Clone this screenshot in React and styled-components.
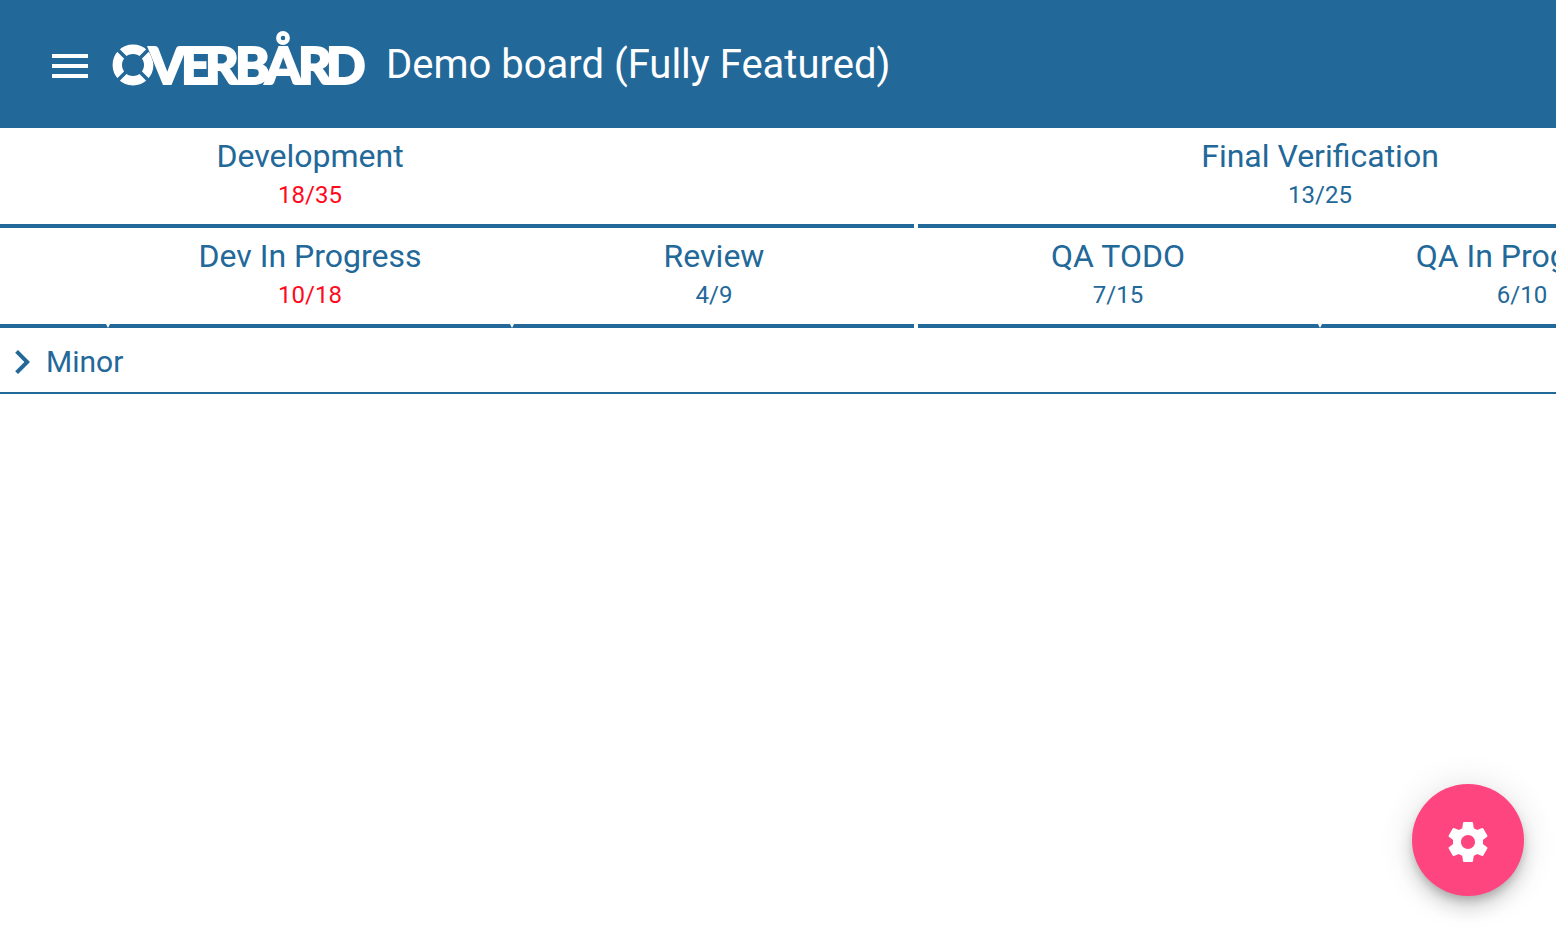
import React, { useLayoutEffect, useRef } from "react";
import styled, { createGlobalStyle, css } from "styled-components";
import { MdMenu, MdChevronRight } from "react-icons/md";

const blue = "#226899";
const red = "#ff0a1c";
const pink = "#ff4580";

const GlobalStyle = createGlobalStyle`
  *, *::before, *::after { box-sizing: border-box; }
  body {
    margin: 0;
    background: #ffffff;
    color: ${blue};
    font-family: Roboto, "Liberation Sans", sans-serif;
  }
`;

const Page = styled.div`
  min-height: 100vh;
  overflow: hidden;
`;

const Toolbar = styled.header`
  display: flex;
  align-items: center;
  height: 128px;
  padding: 4px 32px 0 46px;
  background: ${blue};
  color: #ffffff;
`;

const iconButton = css`
  display: flex;
  align-items: center;
  justify-content: center;
  padding: 0;
  border: 0;
  background: none;
  color: inherit;
  cursor: pointer;
`;

const MenuButton = styled.button`
  ${iconButton}
  margin-right: 16px;
`;

const Logo = styled.svg`
  flex: none;
  display: block;
  overflow: visible;
  margin: 0 22px 16px 0;
`;

const LogoLetters = styled.text`
  font-family: Lato, sans-serif;
  font-weight: 900;
  font-size: 52px;
  fill: #ffffff;
  stroke: #ffffff;
  stroke-width: 2;
`;

const Title = styled.h1`
  margin: 0 0 2px;
  font-size: 40px;
  font-weight: 400;
  line-height: 48px;
  white-space: nowrap;
`;

const HeaderScroller = styled.div`
  overflow: hidden;
`;

const HeaderTrack = styled.div`
  display: flex;
  width: max-content;
`;

const Category = styled.section`
  padding: 0 2px;
`;

const States = styled.div`
  display: flex;
`;

const HeaderCell = styled.div`
  display: flex;
  flex-direction: column;
  align-items: center;
  height: 100px;
  padding-top: 8px;
  border-bottom: 4px solid ${blue};
  white-space: nowrap;
`;

const StateCell = styled(HeaderCell)`
  width: 404px;
  border-left: 2px solid #ffffff;
  border-right: 2px solid #ffffff;
  &:first-child {
    width: 402px;
    border-left: 0;
  }
  &:last-child {
    width: 402px;
    border-right: 0;
  }
`;

const Name = styled.h2`
  margin: 0;
  font-size: 32px;
  font-weight: 400;
  line-height: 40px;
`;

const Count = styled.span`
  font-size: 24px;
  line-height: 38px;
  color: ${(p) => (p.$over ? red : "inherit")};
`;

const Swimlane = styled.button`
  ${iconButton}
  justify-content: flex-start;
  width: 100%;
  height: 66px;
  padding-right: 16px;
  border-bottom: 2px solid ${blue};
  font-family: inherit;
  font-size: 30px;
  line-height: 40px;
`;

const SwimlaneIcon = styled(MdChevronRight)`
  flex: none;
  margin: 4px 0 0 -2px;
`;

const SwimlaneName = styled.span`
  padding-top: 4px;
`;

const SettingsButton = styled.button`
  ${iconButton}
  position: fixed;
  right: 32px;
  bottom: 34px;
  width: 112px;
  height: 112px;
  padding-top: 4px;
  border-radius: 50%;
  background: ${pink};
  color: #ffffff;
  box-shadow:
    0 6px 10px -2px rgba(0, 0, 0, 0.2),
    0 12px 20px 0 rgba(0, 0, 0, 0.14),
    0 2px 36px 0 rgba(0, 0, 0, 0.12);
`;

const categories = [
  {
    name: "Development",
    count: "18/35",
    over: true,
    states: [
      { name: "Dev TODO", count: "4/8" },
      { name: "Dev In Progress", count: "10/18", over: true },
      { name: "Review", count: "4/9" },
    ],
  },
  {
    name: "Final Verification",
    count: "13/25",
    states: [
      { name: "QA TODO", count: "7/15" },
      { name: "QA In Progress", count: "6/10" },
    ],
  },
];

function OverbardLogo() {
  return (
    <Logo width="254" height="56" viewBox="0 0 254 56" role="img" aria-label="Overbård">
      <circle cx="23" cy="35" r="15.7" fill="none" stroke="#fff" strokeWidth="9.4" />
      <path d="M7 19 39 51M39 19 7 51" stroke={blue} strokeWidth="3.6" />
      <path d="M37 11 54 57" stroke={blue} strokeWidth="3" />
      <LogoLetters x="39 71 95 125 155 188 216" y="54">VERBARD</LogoLetters>
      <circle cx="173" cy="8" r="7" fill={blue} stroke={blue} strokeWidth="1" />
      <circle cx="173" cy="8" r="4.6" fill="none" stroke="#fff" strokeWidth="4.6" />
    </Logo>
  );
}

function GearIcon() {
  return (
    <svg width="48" height="48" viewBox="0 0 24 24" fill="currentColor" aria-hidden="true">
      <path d="M19.43 12.98c.04-.32.07-.64.07-.98s-.03-.66-.07-.98l2.11-1.65c.19-.15.24-.42.12-.64l-2-3.46c-.12-.22-.39-.3-.61-.22l-2.49 1c-.52-.4-1.08-.73-1.69-.98l-.38-2.65C14.46 2.18 14.25 2 14 2h-4c-.25 0-.46.18-.49.42l-.38 2.65c-.61.25-1.17.59-1.69.98l-2.49-1c-.23-.09-.49 0-.61.22l-2 3.46c-.13.22-.07.49.12.64l2.11 1.65c-.04.32-.07.65-.07.98s.03.66.07.98l-2.11 1.65c-.19.15-.24.42-.12.64l2 3.46c.12.22.39.3.61.22l2.49-1c.52.4 1.08.73 1.69.98l.38 2.65c.03.24.24.42.49.42h4c.25 0 .46-.18.49-.42l.38-2.65c.61-.25 1.17-.59 1.69-.98l2.49 1c.23.09.49 0 .61-.22l2-3.46c.12-.22.07-.49-.12-.64l-2.11-1.65zM12 15.5c-1.93 0-3.5-1.57-3.5-3.5s1.57-3.5 3.5-3.5 3.5 1.57 3.5 3.5-1.57 3.5-3.5 3.5z" />
    </svg>
  );
}

export default function App() {
  const scroller = useRef(null);

  useLayoutEffect(() => {
    scroller.current.scrollLeft = 296;
  }, []);

  return (
    <>
      <GlobalStyle />
      <Page>
        <Toolbar>
          <MenuButton type="button" aria-label="Menu">
            <MdMenu size={48} />
          </MenuButton>
          <OverbardLogo />
          <Title>Demo board (Fully Featured)</Title>
        </Toolbar>
        <main>
          <HeaderScroller ref={scroller}>
            <HeaderTrack>
              {categories.map((category) => (
                <Category key={category.name}>
                  <HeaderCell>
                    <Name>{category.name}</Name>
                    <Count $over={category.over}>{category.count}</Count>
                  </HeaderCell>
                  <States>
                    {category.states.map((state) => (
                      <StateCell key={state.name}>
                        <Name>{state.name}</Name>
                        <Count $over={state.over}>{state.count}</Count>
                      </StateCell>
                    ))}
                  </States>
                </Category>
              ))}
            </HeaderTrack>
          </HeaderScroller>
          <Swimlane type="button" aria-expanded="false">
            <SwimlaneIcon size={48} />
            <SwimlaneName>Minor</SwimlaneName>
          </Swimlane>
        </main>
        <SettingsButton type="button" aria-label="Settings">
          <GearIcon />
        </SettingsButton>
      </Page>
    </>
  );
}
